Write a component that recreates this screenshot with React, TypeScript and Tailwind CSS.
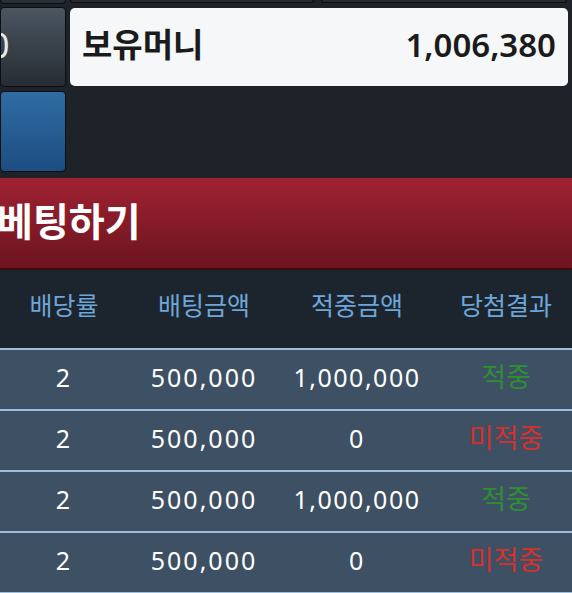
const rows = [
  { rate: "2", bet: "500,000", win: "1,000,000", hit: true },
  { rate: "2", bet: "500,000", win: "0", hit: false },
  { rate: "2", bet: "500,000", win: "1,000,000", hit: true },
  { rate: "2", bet: "500,000", win: "0", hit: false },
];

const cols = "grid grid-cols-[128px_152px_154px_144px]";

export default function App() {
  return (
    <div
      className="w-[572px] h-[593px] overflow-hidden bg-[#1e2329]"
      style={{ fontFamily: '"Noto Sans", "Noto Sans CJK KR", sans-serif' }}
    >
      {/* tail of the row above */}
      <div className="flex h-[7px]">
        <div className="w-[66px] h-[4px] rounded-b border-x border-b border-[#0c0f12] bg-[#2a3038]" />
        <div className="ml-[4px] w-[244px] h-[3px] rounded-b border-x border-b border-[#0c0f12] bg-[#262b31]" />
        <div className="ml-[7px] w-[246px] h-[3px] rounded-b border-x border-b border-[#0c0f12] bg-[#262b31]" />
      </div>

      <div className="flex gap-[4px]">
        <div className="flex flex-col gap-[4px] w-[66px]">
          <div className="h-[80px] rounded-[4px] border border-[#0c0f12] bg-gradient-to-b from-[#4b5661] to-[#272d34] flex items-center overflow-hidden">
            <span className="-ml-[11px] -mt-[4px] text-[34px] text-[#e8eaec]">0</span>
          </div>
          <div className="h-[81px] rounded-[4px] border border-[#0c0f12] bg-gradient-to-b from-[#2f6ca3] to-[#1d4d82]" />
        </div>
        <div className="w-[498px] h-[78px] mt-[1px] rounded-[5px] bg-[#f6f7f9] flex items-center justify-between pl-[12px] pr-[12px]">
          <span className="text-[33px] font-semibold text-[#1b1b1b] -mt-[4px]">보유머니</span>
          <span className="text-[33px] font-semibold text-[#1b1b1b] -mt-[4px]">1,006,380</span>
        </div>
      </div>

      <div className="mt-[6px] h-[92px] bg-gradient-to-b from-[#a02232] to-[#6c1420] border-b-[2px] border-[#3a0a10] flex items-center">
        <span className="-ml-[3px] -mt-[4px] text-[39px] font-bold text-white">베팅하기</span>
      </div>

      <div className={`${cols} h-[78px] bg-[#1c252e] items-center text-center text-[25px] text-[#6ea6da] pb-[6px]`}>
        <span>배당률</span>
        <span>배팅금액</span>
        <span>적중금액</span>
        <span>당첨결과</span>
      </div>

      {rows.map((r, i) => (
        <div
          key={i}
          className={`${cols} h-[61px] border-t-[2px] border-[#9bbfdc] bg-[#3d5064] items-center text-center text-white pb-[4px]`}
        >
          <span className="text-[25px] tracking-[0.08em]">{r.rate}</span>
          <span className="text-[25px] tracking-[0.08em]">{r.bet}</span>
          <span className="text-[25px] tracking-[0.06em]">{r.win}</span>
          <span className={`text-[27px] ${r.hit ? "text-[#2f8f33]" : "text-[#d6312c]"}`}>
            {r.hit ? "적중" : "미적중"}
          </span>
        </div>
      ))}
      <div className="h-[2px] bg-[#9bbfdc]" />
    </div>
  );
}
